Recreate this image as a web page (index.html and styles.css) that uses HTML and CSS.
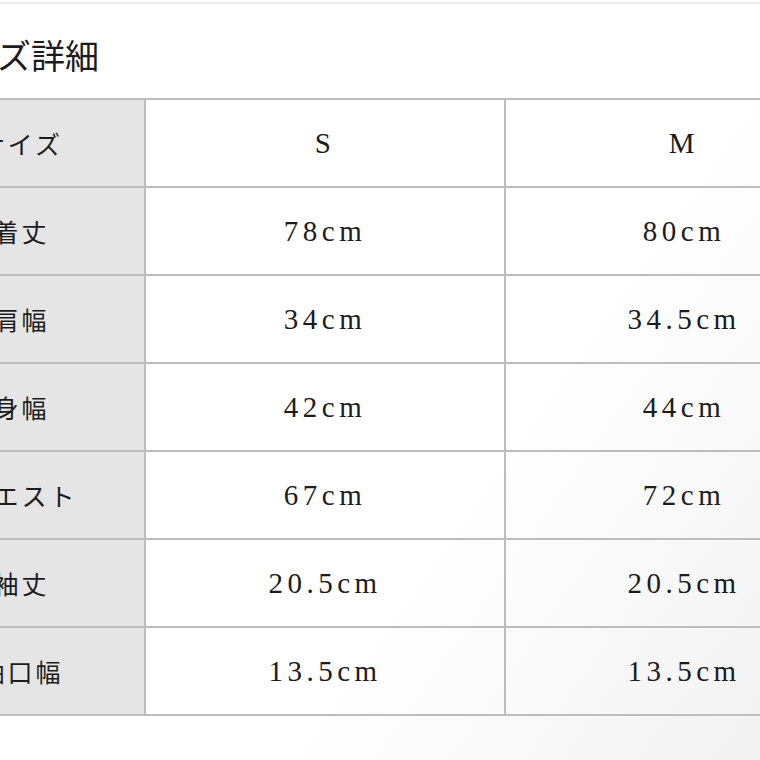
FILE: index.html
```html
<!DOCTYPE html>
<html lang="ja">
<head>
<meta charset="utf-8">
<title>サイズ詳細</title>
<link rel="stylesheet" href="styles.css">
</head>
<body>
<div class="topline"></div>
<div class="page">
  <h1 class="title">サイズ詳細</h1>
  <div class="sizes">
    <div class="cell label">サイズ</div><div class="cell val">S</div><div class="cell val">M</div>
    <div class="cell label">着丈</div><div class="cell val">78cm</div><div class="cell val">80cm</div>
    <div class="cell label">肩幅</div><div class="cell val">34cm</div><div class="cell val">34.5cm</div>
    <div class="cell label">身幅</div><div class="cell val">42cm</div><div class="cell val">44cm</div>
    <div class="cell label">ウエスト</div><div class="cell val">67cm</div><div class="cell val">72cm</div>
    <div class="cell label">袖丈</div><div class="cell val">20.5cm</div><div class="cell val">20.5cm</div>
    <div class="cell label">袖口幅</div><div class="cell val">13.5cm</div><div class="cell val">13.5cm</div>
  </div>
</div>
</body>
</html>
```
FILE: styles.css
```css
html, body {
  margin: 0;
  padding: 0;
  width: 760px;
  height: 760px;
  overflow: hidden;
}
body {
  background: linear-gradient(125deg, #ffffff 62%, #f2f2f2 100%);
  color: #1c1c1c;
  font-family: "Liberation Serif", "Noto Sans CJK JP", serif;
}
.topline {
  margin-top: 2px;
  height: 2px;
  background: #ececec;
}
.page {
  margin-left: -106px;
  width: 1000px;
}
.title {
  margin: 34px 0 0 0;
  padding-left: 36px;
  font-family: "Noto Sans CJK JP", sans-serif;
  font-weight: 400;
  font-size: 34px;
  line-height: 34px;
  height: 34px;
}
.sizes {
  margin-top: 26px;
  display: grid;
  grid-template-columns: 250px 360px 358px;
  grid-auto-rows: 88px;
  border-top: 2px solid #bdbdbd;
  border-left: 2px solid #bdbdbd;
  width: max-content;
}
.cell {
  box-sizing: border-box;
  border-right: 2px solid #bdbdbd;
  border-bottom: 2px solid #bdbdbd;
  display: flex;
  align-items: center;
  justify-content: center;
}
.label {
  background: #e5e5e5;
  font-family: "Noto Sans CJK JP", sans-serif;
  font-size: 25px;
  letter-spacing: 3px;
  padding-left: 3px;
}
.val {
  font-family: "Liberation Serif", serif;
  font-size: 29px;
  letter-spacing: 4.5px;
}
```
